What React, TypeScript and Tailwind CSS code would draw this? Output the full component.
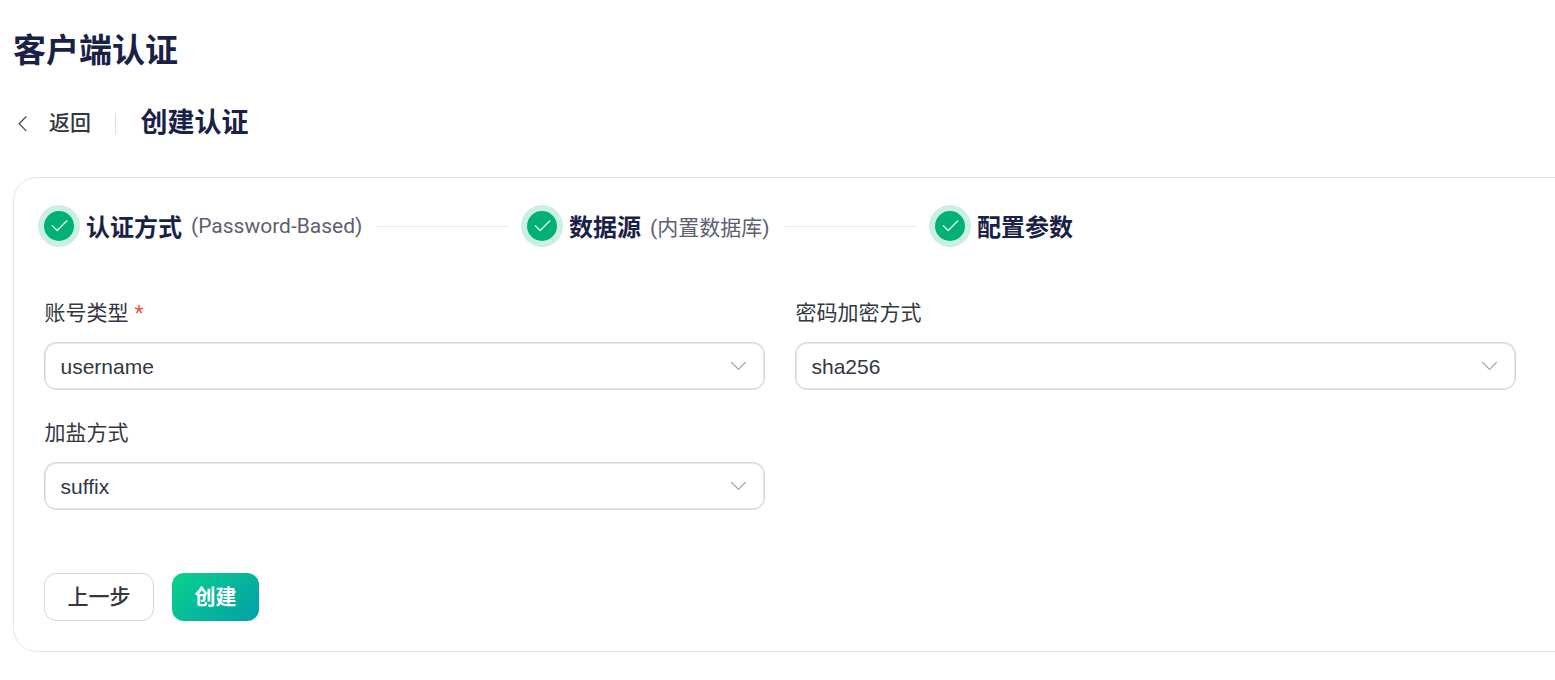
import React, { useState } from 'react';

const steps = [
  { title: '认证方式', desc: '(Password-Based)', box: 'w-[483px]', descPad: '' },
  { title: '数据源', desc: '(内置数据库)', box: 'w-[408px]', descPad: 'pt-[3px]' },
  { title: '配置参数', desc: '', box: '', descPad: '' },
];

const fields = [
  { key: 'account', label: '账号类型', required: true, options: ['username', 'clientid'] },
  { key: 'hash', label: '密码加密方式', required: false, options: ['sha256', 'plain', 'md5', 'sha', 'sha512', 'bcrypt', 'pbkdf2'] },
  { key: 'salt', label: '加盐方式', required: false, options: ['suffix', 'prefix', 'disable'] },
];

const CheckIcon = () => (
  <svg className="w-[18px] h-[14px]" viewBox="0 0 18 14" fill="none" stroke="#d9f3ea" strokeWidth="1.4">
    <path d="M2 6.6 7.2 11.6 17.2 1.4" />
  </svg>
);

const ArrowDown = () => (
  <svg className="w-4 h-[10px] shrink-0" viewBox="0 0 16 10" fill="none" stroke="#a8abb2" strokeWidth="1.3">
    <path d="M1.2 1 8.5 8.4 15.8 1" />
  </svg>
);

const App = () => {
  const [values, setValues] = useState<Record<string, string>>({ account: 'username', hash: 'sha256', salt: 'suffix' });

  const nextOption = (key: string, options: string[]) => {
    const i = options.indexOf(values[key]);
    setValues({ ...values, [key]: options[(i + 1) % options.length] });
  };

  return (
    <div className="h-[680px] overflow-hidden bg-white pl-[13px] pt-[26px] font-[Roboto,'Noto_Sans_CJK_SC',sans-serif] text-[21px] text-[#33373f]">
      <h1 className="h-[50px] text-[33px] leading-[50px] font-bold text-[#1a2147]">客户端认证</h1>

      <div className="mt-[26px] h-[42px] flex items-center">
        <button className="flex items-center">
          <svg className="w-[10px] h-4 ml-1 mt-px" viewBox="0 0 10 16" fill="none" stroke="#4a4e57" strokeWidth="1.3">
            <path d="M9.3 .5 2.1 7.7l7.2 7.2" />
          </svg>
          <span className="ml-[22px] font-medium leading-[30px]">返回</span>
        </button>
        <span className="ml-6 w-px h-[21px] bg-[#dcdfe6]" />
        <h2 className="ml-[24.5px] text-[27px] leading-[40px] font-bold text-[#1a2147]">创建认证</h2>
      </div>

      <div className="mt-[33px] w-[1580px] h-[475px] rounded-[24px] border border-[#e3e5ef] pl-[30px] pt-[33px]">
        <div className="flex h-[30px] items-center">
          {steps.map((s, i) => (
            <div key={s.title} className={`flex items-center h-[30px] ${s.box}`}>
              <span className="flex size-[30px] shrink-0 items-center justify-center rounded-full bg-[#00b173] ring-6 ring-[#ccefe3]">
                <CheckIcon />
              </span>
              <span className="ml-3 whitespace-nowrap pt-[3px] text-[24px] leading-[30px] font-bold text-[#1a2147]">{s.title}</span>
              {s.desc && <span className={`ml-[9px] whitespace-nowrap leading-[30px] text-[#5d6070] ${s.descPad}`}>{s.desc}</span>}
              {i < steps.length - 1 && <span className="ml-[15px] mr-[18px] h-px flex-1 bg-[#dfeeea]" />}
            </div>
          ))}
        </div>

        <div className="mt-[57px] grid grid-cols-[721px_721px] gap-x-[30px] gap-y-[28px]">
          {fields.map((f) => (
            <div key={f.key}>
              <div className="h-11 pl-[0.5px] leading-[31px]">
                {f.label}
                {f.required && <span className="ml-1.5 text-[#f0503c]">*</span>}
              </div>
              <button
                onClick={() => nextOption(f.key, f.options)}
                className="flex h-12 w-full items-center justify-between rounded-[12px] border border-[#d3d6e0] inset-shadow-[0_0_0_1px_#e6e8ee] pl-[15.5px] pr-[18px] font-['Liberation_Sans',sans-serif]"
              >
                <span className="pt-0.5">{values[f.key]}</span>
                <ArrowDown />
              </button>
            </div>
          ))}
        </div>

        <div className="mt-[63px] flex gap-[18px]">
          <button className="h-12 w-[110px] rounded-[12px] border border-[#d3d6e0] pt-0.5 font-medium">上一步</button>
          <button className="h-12 w-[87px] rounded-[12px] bg-[linear-gradient(136deg,#0bd28d_0%,#029fa8_100%)] pt-0.5 font-bold text-white">创建</button>
        </div>
      </div>
    </div>
  );
};

export default App;
